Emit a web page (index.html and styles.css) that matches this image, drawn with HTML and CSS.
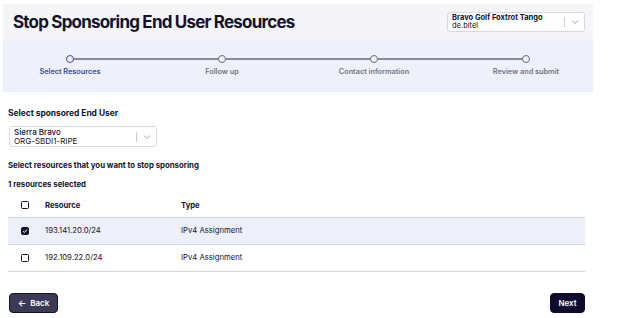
FILE: index.html
```html
<!DOCTYPE html>
<html lang="en">
<head>
    <meta charset="UTF-8">
    <title>Stop Sponsoring End User Resources</title>
    <link rel="stylesheet" href="styles.css">
</head>
<body>
    <div class="page">
        <header class="top">
            <h1>Stop Sponsoring End User Resources</h1>
            <div class="org-select">
                <div class="sel-text">
                    <strong>Bravo Golf Foxtrot Tango</strong>
                    <span>de.bitel</span>
                </div>
                <div class="sel-sep"></div>
                <svg class="chev" width="8" height="6" viewBox="0 0 8 6"><path d="M1 1.5 L4 4.5 L7 1.5" fill="none" stroke="#999" stroke-width="0.9"/></svg>
            </div>
        </header>

        <nav class="stepper">
            <div class="track"></div>
            <div class="step active"><i></i><span>Select Resources</span></div>
            <div class="step"><i></i><span>Follow up</span></div>
            <div class="step"><i></i><span>Contact information</span></div>
            <div class="step"><i></i><span>Review and submit</span></div>
        </nav>

        <section class="form">
            <label class="lbl first">Select sponsored End User</label>
            <div class="user-select">
                <div class="sel-text">
                    <span class="name">Sierra Bravo</span>
                    <span>ORG-SBDI1-RIPE</span>
                </div>
                <div class="sel-sep"></div>
                <svg class="chev" width="8" height="6" viewBox="0 0 8 6"><path d="M1 1.5 L4 4.5 L7 1.5" fill="none" stroke="#999" stroke-width="0.9"/></svg>
            </div>

            <p class="lbl sub">Select resources that you want to stop sponsoring</p>
            <p class="lbl count">1 resources selected</p>

            <table class="res">
                <thead>
                    <tr><th class="cb"><span class="box"></span></th><th class="c-res">Resource</th><th>Type</th></tr>
                </thead>
                <tbody>
                    <tr class="sel">
                        <td class="cb"><span class="box on"><svg width="6" height="6" viewBox="0 0 6 6"><path d="M1 3.2 L2.4 4.5 L5 1.5" fill="none" stroke="#fff" stroke-width="1"/></svg></span></td>
                        <td>193.141.20.0/24</td><td>IPv4 Assignment</td>
                    </tr>
                    <tr>
                        <td class="cb"><span class="box"></span></td>
                        <td>192.109.22.0/24</td><td>IPv4 Assignment</td>
                    </tr>
                </tbody>
            </table>

            <div class="actions">
                <button class="btn back"><span class="arr">&larr;</span> Back</button>
                <button class="btn next">Next</button>
            </div>
        </section>
    </div>
</body>
</html>
```

FILE: styles.css
```css
* {box-sizing: border-box;}
body {margin: 0; background: #fff; font-family: Inter, "Noto Sans", sans-serif; color: #14132b;}
.page {width: 590px; margin: 4px 0 0 3px;}

.top {
    height: 36px; background: #f5f5f8;
    display: flex; justify-content: space-between; align-items: center;
    padding: 0 8px 0 10px;
}
.top h1 {margin: 0; font-size: 17px; font-weight: 700; letter-spacing: -0.8px;}

.org-select, .user-select {
    display: flex; align-items: center;
    background: #fff; border: 1px solid #d8d8de; border-radius: 3px;
}
.org-select {width: 138px; height: 20px; padding: 0 4px;}
.sel-text {flex: 1; display: flex; flex-direction: column; line-height: 8px; font-size: 7.5px;}
.sel-text strong {font-weight: 700;}
.sel-sep {width: 1px; height: 10px; background: #ccc; margin: 0 6px 0 4px;}
.chev {margin-right: 1px;}

.stepper {
    position: relative; height: 52px; background: #eef0fb;
    display: grid; grid-template-columns: repeat(4, 152px); justify-content: center;
    padding-top: 15px;
}
.track {position: absolute; left: 69px; right: 68px; top: 18px; height: 2px; background: #8a8a96;}
.step {display: flex; flex-direction: column; align-items: center; position: relative;}
.step i {display: block; width: 8px; height: 8px; border: 1.5px solid #6e6e7c; border-radius: 50%; background: #eef0fb;}
.step span {font-size: 7.3px; font-weight: 600; color: #74747f; margin-top: 4px;}
.step.active i {border-color: #3d4ba1;}
.step.active span {color: #3d4ba1;}

.form {padding: 16px 5px 0 5px;}
.lbl {display: block; margin: 0; font-size: 7.8px; font-weight: 700;}
.lbl.first {font-size: 8.4px;}
.user-select {width: 148px; height: 21px; padding: 0 4px; margin: 8px 0 0 1px;}
.user-select .sel-text {font-size: 8px; line-height: 8.5px;}
.user-select .name {font-weight: 500;}
.sub {margin-top: 13px;}
.count {margin-top: 9px;}

.res {width: 577px; border-collapse: collapse; margin-top: 5px; font-size: 7.7px;}
.res th {text-align: left; font-weight: 700; height: 23px; padding: 0; border-bottom: 1px solid #d4d4dc;}
.res td {height: 27px; padding: 0; border-bottom: 1px solid #d4d4dc;}
.res tr.sel td {background: #eef0f9;}
.res .cb {width: 37px; padding-left: 13px;}
.res .c-res {width: 136px;}
.box {display: flex; align-items: center; justify-content: center; width: 8px; height: 8px; border: 1.2px solid #14132b; border-radius: 1.5px;}
.box.on {background: #14132b;}

.actions {display: flex; justify-content: space-between; width: 577px; margin-top: 21px; padding-left: 1px;}
.btn {font-family: inherit; font-size: 8px; font-weight: 600; color: #fff; border-radius: 4px; height: 20px; padding: 0; cursor: pointer;}
.back {width: 49px; background: #3b3a57; border: 1.5px solid #14132b;}
.arr {font-size: 9px; margin-right: 2px;}
.next {width: 35px; background: #100b2e; border: 1px solid #100b2e;}
```
